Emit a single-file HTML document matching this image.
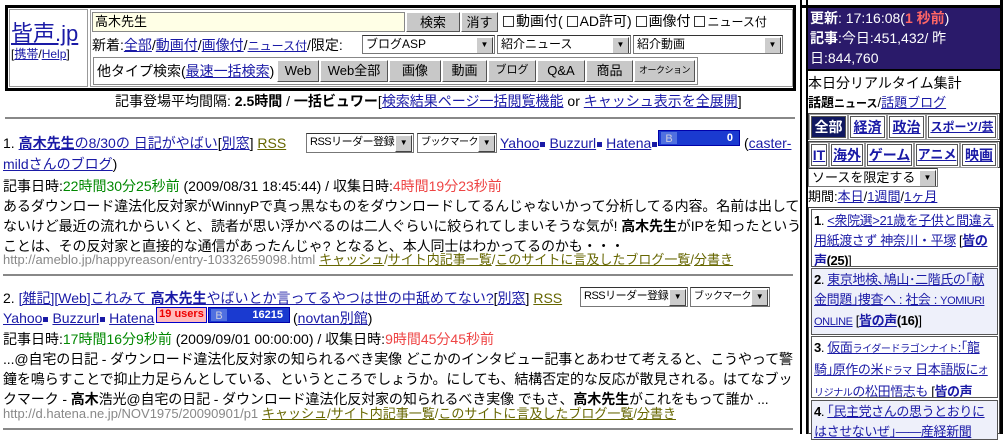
<!DOCTYPE html>
<html><head><meta charset="utf-8">
<style>
*{margin:0;padding:0;box-sizing:border-box}
body{width:1008px;height:434px;overflow:hidden;background:#fff;font-family:"Liberation Sans","Noto Sans CJK JP",sans-serif;font-size:14px;line-height:20px;color:#000;position:relative}
.a{position:absolute;white-space:nowrap}
a{color:#1a1aa6;text-decoration:underline}
.btn{position:absolute;background:#c8c8c8;border:1px solid;border-color:#fff #555 #555 #fff;text-align:center;font-size:13px;line-height:19px;overflow:hidden}
.sel{position:absolute;background:#fff;border:1px solid #777;border-top-color:#333;font-size:12px;line-height:17px;padding-left:3px;overflow:hidden}
.sel:after{content:"▼";position:absolute;right:1px;top:1px;width:15px;height:15px;background:#ccc;border:1px solid;border-color:#fff #444 #444 #fff;font-size:8px;line-height:14px;text-align:center}
.cb{display:inline-block;width:11px;height:11px;border:1px solid #333;vertical-align:-1px;margin-right:2px}
.g{color:#080}.r{color:#e44}.gr{color:#888}.o{color:#660}
.o a,a.o{color:#660}
.tab{position:absolute;border:1px solid #555;outline:1px solid #999;outline-offset:1px;font-weight:bold;font-size:14px;line-height:20px;text-align:center;color:#1a1aa6;text-decoration:underline}
.sq{display:inline-block;width:5px;height:5px;background:#1a1aa6;margin:0 4px 1px 1px}
.li{position:absolute;left:811px;width:187px;border:1px solid #555;padding:1px 2px;line-height:20px;white-space:normal;font-size:13px;letter-spacing:-0.4px;overflow:hidden}
</style></head><body>
<!-- top box -->
<div class="a" style="left:5px;top:5px;width:791px;height:86px;border:3px solid #000"></div>
<div class="a" style="left:9px;top:9px;width:79px;height:78px;border:1px solid #999"></div>
<div class="a" style="left:90px;top:9px;width:703px;height:78px;border:1px solid #999"></div>
<div class="a" style="left:11px;top:22px;font-size:22px;line-height:24px;"><a href="#">皆声.jp</a></div>
<div class="a" style="left:11px;top:46px;font-size:12px;line-height:16px">[<a href="#">携帯</a>/<a href="#">Help</a>]</div>
<div class="a" style="left:92px;top:12px;width:313px;height:20px;background:#ffffe6;border:1px solid #888;font-size:13px;line-height:18px;padding-left:2px">高木先生</div>
<div class="btn" style="left:406px;top:12px;width:54px;height:20px">検索</div>
<div class="btn" style="left:461px;top:12px;width:37px;height:20px">消す</div>
<div class="a" style="left:503px;top:11px;font-size:14px"><span class="cb"></span>動画付( <span class="cb"></span>AD許可) <span class="cb"></span>画像付 <span class="cb"></span><span style="font-size:12px">ニュース付</span></div>
<div class="a" style="left:92px;top:35px;font-size:14px">新着:<a href="#">全部</a>/<a href="#">動画付</a>/<a href="#">画像付</a>/<a href="#" style="font-size:12px">ニュース付</a>/限定:</div>
<div class="sel" style="left:362px;top:35px;width:133px;height:19px">ブログASP</div>
<div class="sel" style="left:497px;top:35px;width:134px;height:19px">紹介ニュース</div>
<div class="sel" style="left:633px;top:35px;width:150px;height:19px">紹介動画</div>
<div class="a" style="left:93px;top:57px;width:605px;height:28px;border:1px solid #888"></div>
<div class="a" style="left:97px;top:61px;font-size:14px">他タイプ検索(<a href="#">最速一括検索</a>)</div>
<div class="btn" style="left:277px;top:60px;width:42px;height:22px">Web</div>
<div class="btn" style="left:320px;top:60px;width:68px;height:22px">Web全部</div>
<div class="btn" style="left:389px;top:60px;width:52px;height:22px">画像</div>
<div class="btn" style="left:442px;top:60px;width:45px;height:22px">動画</div>
<div class="btn" style="left:488px;top:60px;width:48px;height:22px;font-size:11px">ブログ</div>
<div class="btn" style="left:537px;top:60px;width:48px;height:22px">Q&amp;A</div>
<div class="btn" style="left:586px;top:60px;width:47px;height:22px">商品</div>
<div class="btn" style="left:634px;top:60px;width:61px;height:22px;font-size:9px;letter-spacing:-0.5px">オークション</div>
<div class="a" style="left:115px;top:91px;font-size:14px">記事登場平均間隔: <b>2.5時間</b> / <b>一括ビュワー</b>[<a href="#">検索結果ページ一括閲覧機能</a> or <a href="#">キャッシュ表示を全展開</a>]</div>
<div class="a" style="left:5px;top:117px;width:790px;height:2px;background:#888"></div>

<!-- item 1 -->
<div class="a" style="left:3px;top:133px">1. <a href="#"><b>高木先生</b>の8/30の 日記がやばい</a>[<a href="#">別窓</a>] <span class="o"><a href="#">RSS</a></span></div>
<div class="sel" style="left:306px;top:133px;width:108px;height:20px;font-size:11px;letter-spacing:-0.5px">RSSリーダー登録</div>
<div class="sel" style="left:417px;top:133px;width:80px;height:20px;font-size:10px;letter-spacing:-0.5px">ブックマーク</div>
<div class="a" style="left:500px;top:133px"><a href="#">Yahoo</a><span class="sq"></span><a href="#">Buzzurl</a><span class="sq"></span><a href="#">Hatena</a><span class="sq"></span></div>
<div class="a" style="left:658px;top:130px;width:82px;height:16px;background:#1a3ad0;border:1px solid #00a;color:#fff;font-size:11px;font-weight:bold;text-align:right;padding-right:6px;line-height:14px"><span style="position:absolute;left:2px;top:1px;width:16px;height:12px;background:#5070e0;color:#ccd;font-weight:normal;text-align:center">B</span>0</div>
<div class="a" style="left:744px;top:133px">(<a href="#">caster-</a></div>
<div class="a" style="left:3px;top:154px"><a href="#">mildさんのブログ</a>)</div>
<div class="a" style="left:3px;top:176px">記事日時:<span class="g">22時間30分25秒前</span> (2009/08/31 18:45:44) / 収集日時:<span class="r">4時間19分23秒前</span></div>
<div class="a" style="left:3px;top:196px;line-height:20px;white-space:normal;width:800px;letter-spacing:-0.1px">あるダウンロード違法化反対家がWinnyPで真っ黒なものをダウンロードしてるんじゃないかって分析してる内容。名前は出してないけど最近の流れからいくと、読者が思い浮かべるのは二人ぐらいに絞られてしまいそうな気が! <b>高木先生</b>がIPを知ったということは、その反対家と直接的な通信があったんじゃ? となると、本人同士はわかってるのかも・・・</div>
<div class="a" style="left:3px;top:249px"><span class="gr" style="font-size:13px">http://ameblo.jp/happyreason/entry-10332659098.html</span> <span class="o" style="font-size:13px"><a href="#">キャッシュ</a>/<a href="#">サイト内記事一覧</a>/<a href="#">このサイトに言及したブログ一覧</a>/<a href="#">分書き</a></span></div>
<div class="a" style="left:3px;top:274px;width:790px;height:2px;background:#888"></div>

<!-- item 2 -->
<div class="a" style="left:3px;top:288px">2. <a href="#">[雑記][Web]これみて <b>高木先生</b>やばいとか言ってるやつは世の中舐めてない?</a>[<a href="#">別窓</a>] <span class="o"><a href="#">RSS</a></span></div>
<div class="sel" style="left:580px;top:287px;width:108px;height:20px;font-size:11px;letter-spacing:-0.5px">RSSリーダー登録</div>
<div class="sel" style="left:690px;top:287px;width:80px;height:20px;font-size:10px;letter-spacing:-0.5px">ブックマーク</div>
<div class="a" style="left:3px;top:308px"><a href="#">Yahoo</a><span class="sq"></span><a href="#">Buzzurl</a><span class="sq"></span><a href="#">Hatena</a></div>
<div class="a" style="left:156px;top:307px;width:51px;height:16px;background:#fbb;border:1px solid #00c;color:#e00;font-size:11px;font-weight:bold;line-height:13px;text-align:center">19 users</div>
<div class="a" style="left:208px;top:307px;width:82px;height:16px;background:#1a3ad0;border:1px solid #00a;color:#fff;font-size:11px;font-weight:bold;text-align:right;padding-right:6px;line-height:14px"><span style="position:absolute;left:2px;top:1px;width:16px;height:12px;background:#5070e0;color:#ccd;font-weight:normal;text-align:center">B</span>16215</div>
<div class="a" style="left:293px;top:308px">(<a href="#">novtan別館</a>)</div>
<div class="a" style="left:3px;top:329px">記事日時:<span class="g">17時間16分9秒前</span> (2009/09/01 00:00:00) / 収集日時:<span class="r">9時間45分45秒前</span></div>
<div class="a" style="left:3px;top:349px;line-height:20px;white-space:normal;width:800px;letter-spacing:-0.1px">...@自宅の日記 - ダウンロード違法化反対家の知られるべき実像 どこかのインタビュー記事とあわせて考えると、こうやって警鐘を鳴らすことで抑止力足らんとしている、というところでしょうか。にしても、結構否定的な反応が散見される。はてなブックマーク - <b>高木</b>浩光@自宅の日記 - ダウンロード違法化反対家の知られるべき実像 でもさ、<b>高木先生</b>がこれをもって誰か ...</div>
<div class="a" style="left:3px;top:403px"><span class="gr" style="font-size:13px">http://d.hatena.ne.jp/NOV1975/20090901/p1</span> <span class="o" style="font-size:13px"><a href="#">キャッシュ</a>/<a href="#">サイト内記事一覧</a>/<a href="#">このサイトに言及したブログ一覧</a>/<a href="#">分書き</a></span></div>
<div class="a" style="left:3px;top:428px;width:790px;height:2px;background:#888"></div>

<!-- right panel -->
<div class="a" style="left:800px;top:0;width:8px;height:434px;border-left:2px solid #000;border-right:2px solid #000"></div>
<div class="a" style="left:1000px;top:0;width:3px;height:434px;background:#000"></div>
<div class="a" style="left:800px;top:5px;width:203px;height:3px;background:#000"></div>
<div class="a" style="left:808px;top:8px;width:192px;height:61px;background:#2a1a6a;color:#fff;font-size:14px;line-height:20px;padding-left:2px;white-space:normal"><b>更新</b>: 17:16:08(<b style="color:#f66">1 秒前</b>)<br><b>記事</b>:今日:451,432/ 昨<br>日:844,760</div>
<div class="a" style="left:808px;top:69px;width:192px;height:2px;background:#000"></div>
<div class="a" style="left:808px;top:73px;font-size:14px">本日分リアルタイム集計</div>
<div class="a" style="left:808px;top:93px;font-size:13px"><b>話題</b><b style="font-size:11px">ニュース</b>/<a href="#">話題ブログ</a></div>
<div class="a" style="left:808px;top:113px;width:192px;height:27px;border:1px solid #444"></div>
<div class="tab" style="left:811px;top:116px;width:35px;background:#101860;color:#fff;text-decoration:none">全部</div>
<div class="tab" style="left:850px;top:116px;width:35px">経済</div>
<div class="tab" style="left:889px;top:116px;width:35px">政治</div>
<div class="tab" style="left:928px;top:116px;width:68px;font-size:12px">スポーツ/芸</div>
<div class="a" style="left:808px;top:141px;width:192px;height:27px;border:1px solid #444"></div>
<div class="tab" style="left:811px;top:144px;width:16px">IT</div>
<div class="tab" style="left:831px;top:144px;width:32px">海外</div>
<div class="tab" style="left:867px;top:144px;width:45px">ゲーム</div>
<div class="tab" style="left:916px;top:144px;width:42px;font-size:13px">アニメ</div>
<div class="tab" style="left:962px;top:144px;width:34px">映画</div>
<div class="sel" style="left:808px;top:168px;width:130px;height:19px;font-size:13px">ソースを限定する</div>
<div class="a" style="left:808px;top:187px;font-size:13px">期間:<a href="#">本日</a>/<a href="#">1週間</a>/<a href="#">1ヶ月</a></div>
<div class="a" style="left:808px;top:207px;width:192px;height:227px;border:1px solid #444"></div>
<div class="li" style="top:209px;height:58px"><b>1</b>. <a href="#">&lt;衆院選&gt;21歳を子供と間違え用紙渡さず 神奈川・平塚</a> [<a href="#"><b>皆の声</b></a><b>(25)</b>]</div>
<div class="li" style="top:268px;height:67px;background:#eef0fa"><b>2</b>. <a href="#">東京地検､鳩山･二階氏の｢献金問題｣捜査へ : 社会 : <span style="font-size:11px">YOMIURI ONLINE</span></a> [<a href="#"><b>皆の声</b></a><b>(16)</b>]</div>
<div class="li" style="top:336px;height:62px"><b>3</b>. <a href="#">仮面<span style="font-size:10px">ライダードラゴンナイト</span>:｢龍騎｣原作の米<span style="font-size:10px">ドラマ</span> 日本語版に<span style="font-size:10px">オリジナル</span>の松田悟志も</a> [<a href="#"><b>皆の声</b></a><b>(14)</b>]</div>
<div class="li" style="top:400px;height:40px;background:#eef0fa"><b>4</b>. <a href="#">｢民主党さんの思うとおりにはさせないぜ｣――産経新聞</a></div>
</body></html>
